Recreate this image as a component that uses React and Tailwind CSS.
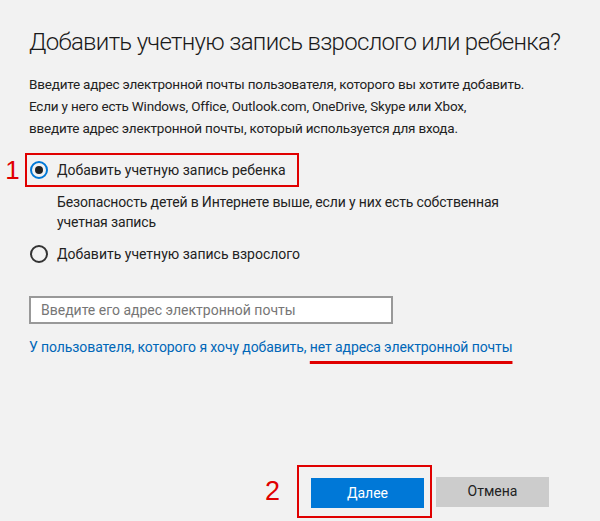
import React from 'react';

function Radio({ checked }) {
  return (
    <span
      className={`flex h-[18px] w-[18px] shrink-0 items-center justify-center rounded-full border-2 ${
        checked ? 'border-[#0078d7]' : 'border-[#333]'
      }`}
    >
      {checked && <span className="h-[8px] w-[8px] rounded-full bg-[#222]" />}
    </span>
  );
}

export default function App() {
  return (
    <div className="flex h-[521px] w-[600px] flex-col bg-[#f2f2f2] font-['Roboto',sans-serif] text-[#222]">
      <h1 className="ml-[29px] mt-[26px] whitespace-nowrap text-[24px] font-light leading-[32px] tracking-[-0.7px] text-[#1a1a1a]">
        Добавить учетную запись взрослого или ребенка?
      </h1>

      <p className="ml-[29px] mt-[15px] whitespace-nowrap text-[13.5px] leading-[22px] tracking-[-0.2px]">
        Введите адрес электронной почты пользователя, которого вы хотите добавить.
        <br />
        Если у него есть Windows, Office, Outlook.com, OneDrive, Skype или Xbox,
        <br />
        введите адрес электронной почты, который используется для входа.
      </p>

      {/* вариант 1 с пометкой */}
      <div className="mt-[14px] flex items-center">
        <span className="w-[25px] text-center font-['Liberation_Sans',sans-serif] text-[26px] leading-[34px] text-[#e00000]">
          1
        </span>
        <label className="flex h-[34px] w-[274px] items-center gap-[9px] border-2 border-[#e00000] pl-[3px] text-[14px]">
          <Radio checked />
          Добавить учетную запись ребенка
        </label>
      </div>

      <p className="ml-[57px] mt-[5px] whitespace-nowrap text-[14px] leading-[20px] tracking-[-0.15px]">
        Безопасность детей в Интернете выше, если у них есть собственная
        <br />
        учетная запись
      </p>

      <label className="ml-[30px] mt-[12px] flex h-[20px] items-center gap-[9px] text-[14px]">
        <Radio />
        Добавить учетную запись взрослого
      </label>

      <div className="ml-[29px] mt-[32px] flex h-[28px] w-[364px] items-center border-2 border-[#999] bg-white px-[10px] text-[14px] text-[#767676]">
        Введите его адрес электронной почты
      </div>

      <p className="ml-[29px] mt-[13px] whitespace-nowrap text-[14px] leading-[20px] tracking-[-0.1px] text-[#0067b8]">
        У пользователя, которого я хочу добавить,{' '}
        <span className="underline decoration-[#e00000] decoration-[3px] underline-offset-[9px]">
          нет адреса электронной почты
        </span>
      </p>

      {/* кнопки */}
      <div className="mt-auto mb-[3px] flex items-center justify-end pr-[51px]">
        <span className="mr-[17px] font-['Liberation_Sans',sans-serif] text-[27px] leading-none text-[#e00000]">
          2
        </span>
        <div className="border-2 border-[#e00000] pb-[8px] pl-[12px] pr-[6px] pt-[11px]">
          <button className="h-[30px] w-[113px] bg-[#0078d7] text-[14px] text-white">Далее</button>
        </div>
        <button className="ml-[4px] h-[30px] w-[113px] bg-[#cccccc] text-[14px] text-[#222]">Отмена</button>
      </div>
    </div>
  );
}
